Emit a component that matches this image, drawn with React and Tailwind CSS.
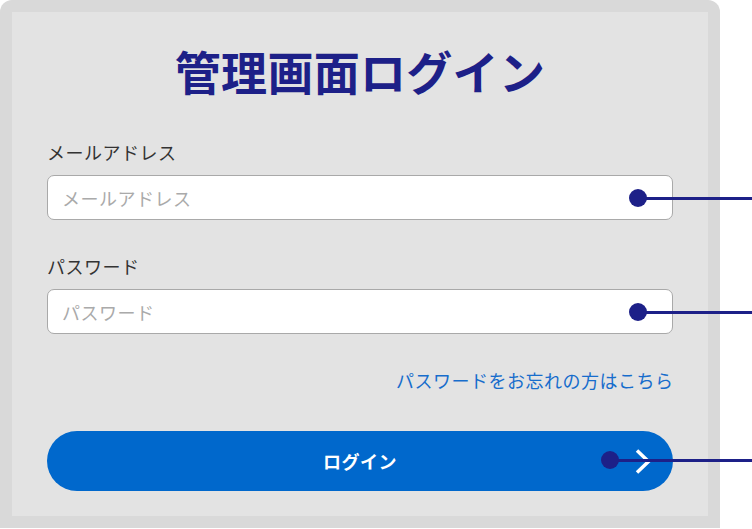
/**
 * App.jsx
 * Admin login panel with callout markers.
 */

const FONT = "font-['Noto_Sans_CJK_JP','Noto_Sans',sans-serif]"

function Callout({ top, left }) {
  // Dot with a line running out to the right edge of the page.
  return (
    <div className="pointer-events-none absolute" style={{ top, left }}>
      <div className="absolute left-0 top-[-1.5px] h-[3px] w-[160px] bg-[#1d2088]" />
      <div className="absolute left-[-9px] top-[-9px] h-[18px] w-[18px] rounded-full bg-[#1d2088]" />
    </div>
  )
}

export default function App() {
  return (
    <div className={`relative h-[529px] w-[752px] overflow-hidden bg-white ${FONT}`}>
      <div className="h-[528px] w-[720px] rounded-t-[12px] bg-[#d9d9d9] p-[12px]">
        <div className="flex h-full flex-col bg-[#e3e3e3] px-[35px] pt-[35px]">
          <h1 className="text-center text-[46px] font-bold leading-[46px] tracking-[0.3px] text-[#1d2088]">管理画面ログイン</h1>

          <label className="mt-[46px] block text-[18px] leading-[27px] tracking-[0.5px] text-[#333333]">メールアドレス</label>
          <input
            type="email"
            placeholder="メールアドレス"
            className="mt-[9px] h-[45px] w-full rounded-[7px] border border-[#a9a9a9] bg-white px-[14px] text-[18px] tracking-[0.5px] text-[#333333] outline-none placeholder:text-[#aaaaaa]"
          />

          <label className="mt-[33px] block text-[18px] leading-[27px] tracking-[0.5px] text-[#333333]">パスワード</label>
          <input
            type="password"
            placeholder="パスワード"
            className="mt-[9px] h-[45px] w-full rounded-[7px] border border-[#a9a9a9] bg-white px-[14px] text-[18px] tracking-[0.5px] text-[#333333] outline-none placeholder:text-[#aaaaaa]"
          />

          <div className="mt-[33px] text-right text-[18px] leading-[27px] tracking-[0.5px]">
            <a href="#" className="mr-[-0.5px] text-[#176dcc]">パスワードをお忘れの方はこちら</a>
          </div>

          <button
            type="button"
            className="relative mt-[37px] flex h-[60px] w-full items-center justify-center rounded-full bg-[#0068cc] text-[18px] font-bold tracking-[0.5px] text-white"
          >
            ログイン
            <svg className="absolute right-[22px] top-[18px]" width="16" height="25" viewBox="0 0 16 25" fill="none">
              <path d="M2 1.5 L13.5 12.5 L2 23.5" stroke="white" strokeWidth="3.5" />
            </svg>
          </button>
        </div>
      </div>

      <Callout top={198} left={638} />
      <Callout top={312} left={638} />
      <Callout top={460} left={610} />
    </div>
  )
}
